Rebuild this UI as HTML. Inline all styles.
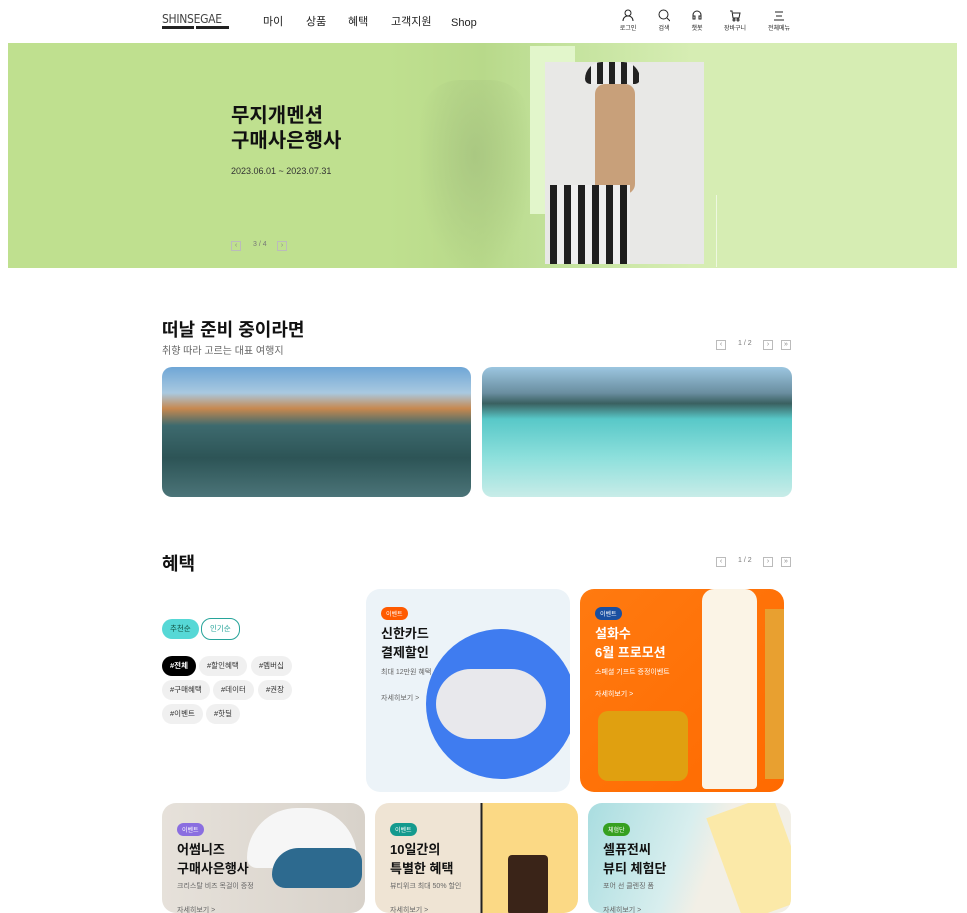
<!DOCTYPE html>
<html><head><meta charset="utf-8"><style>
*{margin:0;padding:0;box-sizing:border-box}
body{width:967px;height:902px;overflow:hidden;background:#fff;font-family:"Liberation Sans","Noto Sans CJK KR",sans-serif;color:#111;position:relative}
.a{position:absolute}
.nav{font-size:11px;color:#222;top:15px;line-height:14px}
.ic{top:9px;width:30px;text-align:center;font-size:6px;color:#222}
.ic svg{display:block;margin:0 auto 1px}
.pg{width:10px;height:10px;border:1px solid #bbb;font-size:7px;line-height:8px;text-align:center;color:#888}
.card{border-radius:14px;overflow:hidden}
.tag{font-size:6px;color:#fff;border-radius:8px;padding:2px 5px;display:inline-block}
.ct{font-size:13px;font-weight:bold;line-height:19px}
.cs{font-size:7px;color:#666}
.chip{height:20px;border-radius:10px;background:#f0f0f0;font-size:7.5px;line-height:20px;padding:0 8px;color:#333}
</style></head><body>
<div class="a" style="left:162px;top:12px;font-size:12px;color:#444;letter-spacing:-0.3px;font-family:'DejaVu Sans Condensed','Liberation Sans',sans-serif">SHINSEGAE</div>
<div class="a" style="left:162px;top:26px;width:32px;height:3px;background:#222"></div>
<div class="a" style="left:196px;top:26px;width:33px;height:3px;background:#222"></div>
<div class="a nav" style="left:263px">마이</div>
<div class="a nav" style="left:306px">상품</div>
<div class="a nav" style="left:348px">혜택</div>
<div class="a nav" style="left:391px">고객지원</div>
<div class="a nav" style="left:451px;top:16px">Shop</div>
<div class="a ic" style="left:613px"><svg width="12" height="13" viewBox="0 0 12 13" fill="none" stroke="#222"><circle cx="6" cy="4" r="3"/><path d="M1 12c0-3 2-5 5-5s5 2 5 5"/></svg>로그인</div>
<div class="a ic" style="left:649px"><svg width="12" height="13" viewBox="0 0 12 13" fill="none" stroke="#222"><circle cx="5.5" cy="5.5" r="4.5"/><path d="M9 9l3 3"/></svg>검색</div>
<div class="a ic" style="left:682px"><svg width="12" height="13" viewBox="0 0 12 13" fill="none" stroke="#222"><path d="M2 8V6a4 4 0 018 0v2M2 7v3h2V7zM10 7v3H8V7z"/></svg>챗봇</div>
<div class="a ic" style="left:720px"><svg width="12" height="13" viewBox="0 0 12 13" fill="none" stroke="#222"><path d="M1 2h2l1 7h6l1-5H4"/><circle cx="5" cy="11" r="1"/><circle cx="9" cy="11" r="1"/></svg>장바구니</div>
<div class="a ic" style="left:764px"><svg width="12" height="13" viewBox="0 0 12 13" fill="none" stroke="#222"><path d="M2 3h8M3 7h6M1 11h10"/></svg>전체메뉴</div>

<div class="a" style="left:8px;top:43px;width:949px;height:225px;background:linear-gradient(90deg,#bfe08f 0%,#bfe08f 40%,#b8d98a 50%,#c3e29c 58%,#d6edb3 72%,#d6edb3 100%)"></div>
<div class="a" style="left:420px;top:80px;width:110px;height:188px;border-radius:40px 40px 0 0;background:radial-gradient(ellipse at 50% 40%,#aac882,transparent 75%)"></div>
<div class="a" style="left:530px;top:46px;width:45px;height:168px;background:#e2f6cb"></div>
<div class="a" style="left:545px;top:62px;width:159px;height:202px;background:#e8e8e6"></div>
<div class="a" style="left:585px;top:62px;width:55px;height:22px;border-radius:20px 20px 6px 6px;background:repeating-linear-gradient(90deg,#222 0 6px,#eee 6px 12px)"></div>
<div class="a" style="left:595px;top:84px;width:40px;height:110px;background:#c8a07a;border-radius:10px"></div>
<div class="a" style="left:550px;top:185px;width:80px;height:79px;background:repeating-linear-gradient(90deg,#1f1f1f 0 7px,#eee 7px 14px)"></div>
<div class="a" style="left:716px;top:195px;width:1px;height:72px;background:#eef8e0"></div>
<div class="a" style="left:231px;top:104px;font-size:20px;font-weight:bold;line-height:25px;color:#111">무지개멘션<br>구매사은행사</div>
<div class="a" style="left:231px;top:166px;font-size:9px;color:#333">2023.06.01 ~ 2023.07.31</div>
<div class="a pg" style="left:231px;top:241px">‹</div>
<div class="a" style="left:253px;top:241px;font-size:7px;color:#777">3 / 4</div>
<div class="a pg" style="left:277px;top:241px">›</div>

<div class="a" style="left:162px;top:316px;font-size:18px;font-weight:bold">떠날 준비 중이라면</div>
<div class="a" style="left:162px;top:342px;font-size:10px;color:#666">취향 따라 고르는 대표 여행지</div>
<div class="a pg" style="left:716px;top:340px">‹</div>
<div class="a" style="left:738px;top:340px;font-size:7px;color:#777">1 / 2</div>
<div class="a pg" style="left:763px;top:340px">›</div>
<div class="a pg" style="left:781px;top:340px">»</div>
<div class="a" style="left:162px;top:367px;width:309px;height:130px;border-radius:10px;background:linear-gradient(180deg,#6fa6d6 0%,#a9c9e0 20%,#c7884f 32%,#3d6a6e 45%,#2d5456 70%,#4b7478 100%)"></div>
<div class="a" style="left:482px;top:367px;width:310px;height:130px;border-radius:10px;background:linear-gradient(180deg,#9cc6e0 0%,#6a8ea0 20%,#3a6060 28%,#58c8c8 40%,#8ee0dc 70%,#c8ece8 100%)"></div>

<div class="a" style="left:162px;top:550px;font-size:18px;font-weight:bold">혜택</div>
<div class="a pg" style="left:716px;top:557px">‹</div>
<div class="a" style="left:738px;top:557px;font-size:7px;color:#777">1 / 2</div>
<div class="a pg" style="left:763px;top:557px">›</div>
<div class="a pg" style="left:781px;top:557px">»</div>

<div class="a chip" style="left:162px;top:619px;background:#56d8d6;color:#154">추천순</div>
<div class="a chip" style="left:201px;top:618px;height:22px;background:#fff;border:1px solid #27a49a;color:#27a49a;line-height:20px">인기순</div>
<div class="a chip" style="left:162px;top:656px;background:#000;color:#fff;font-weight:bold">#전체</div>
<div class="a chip" style="left:199px;top:656px">#할인혜택</div>
<div class="a chip" style="left:251px;top:656px">#멤버십</div>
<div class="a chip" style="left:162px;top:680px">#구매혜택</div>
<div class="a chip" style="left:213px;top:680px">#데이터</div>
<div class="a chip" style="left:258px;top:680px">#권장</div>
<div class="a chip" style="left:162px;top:704px">#이벤트</div>
<div class="a chip" style="left:206px;top:704px">#핫딜</div>

<div class="a card" style="left:366px;top:589px;width:204px;height:203px;background:#ecf3f8">
 <div class="a" style="left:60px;top:40px;width:150px;height:150px;border-radius:50%;background:#3f7cf0"></div>
 <div class="a" style="left:70px;top:80px;width:110px;height:70px;border-radius:35px;background:#e8e8ec"></div>
 <div class="a" style="left:15px;top:14px"><span class="tag" style="background:#ff5a00">이벤트</span><div class="ct" style="margin-top:3px">신한카드<br>결제할인</div><div class="cs" style="margin-top:5px">최대 12만원 혜택</div><div class="cs" style="margin-top:16px">자세히보기 &gt;</div></div>
</div>
<div class="a card" style="left:580px;top:589px;width:204px;height:203px;background:linear-gradient(135deg,#ff7a10,#ff6a00)">
 <div class="a" style="left:122px;top:0;width:55px;height:200px;border-radius:12px 12px 4px 4px;background:#fbf4e6"></div>
 <div class="a" style="left:185px;top:20px;width:20px;height:170px;background:#e8a030"></div>
 <div class="a" style="left:18px;top:122px;width:90px;height:70px;border-radius:10px;background:#e0a010"></div>
 <div class="a" style="left:15px;top:14px;color:#fff"><span class="tag" style="background:#1a4fa0">이벤트</span><div class="ct" style="margin-top:3px;color:#fff">설화수<br>6월 프로모션</div><div class="cs" style="margin-top:5px;color:#fff">스페셜 기프트 증정이벤트</div><div class="cs" style="margin-top:12px;color:#fff">자세히보기 &gt;</div></div>
</div>

<div class="a card" style="left:162px;top:803px;width:203px;height:110px;background:linear-gradient(90deg,#e6e1da,#d8d2ca)">
 <div class="a" style="left:85px;top:5px;width:110px;height:60px;border-radius:50px 50px 10px 10px;background:#f6f6f6"></div>
 <div class="a" style="left:110px;top:45px;width:90px;height:40px;border-radius:40px 20px 20px 20px;background:#2d6a8f"></div>
 <div class="a" style="left:15px;top:16px"><span class="tag" style="background:#8a6ee0">이벤트</span><div class="ct" style="margin-top:3px">어썸니즈<br>구매사은행사</div><div class="cs" style="margin-top:3px">크리스탈 비즈 목걸이 증정</div><div class="cs" style="margin-top:14px">자세히보기 &gt;</div></div>
</div>
<div class="a card" style="left:375px;top:803px;width:203px;height:110px;background:linear-gradient(90deg,#efe4d4 52%,#222 52%,#222 53%,#fbd985 53%)">
 <div class="a" style="left:133px;top:52px;width:40px;height:60px;border-radius:4px;background:#3a2418"></div>
 <div class="a" style="left:15px;top:16px"><span class="tag" style="background:#149a8e">이벤트</span><div class="ct" style="margin-top:3px">10일간의<br>특별한 혜택</div><div class="cs" style="margin-top:3px">뷰티위크 최대 50% 할인</div><div class="cs" style="margin-top:14px">자세히보기 &gt;</div></div>
</div>
<div class="a card" style="left:588px;top:803px;width:203px;height:110px;background:linear-gradient(110deg,#a9dde0 0%,#d8eeee 45%,#f2efe6 60%)">
 <div class="a" style="left:135px;top:0;width:70px;height:110px;background:#fbe9a8;transform:rotate(-20deg)"></div>
 <div class="a" style="left:15px;top:16px"><span class="tag" style="background:#36a020">체험단</span><div class="ct" style="margin-top:3px">셀퓨전씨<br>뷰티 체험단</div><div class="cs" style="margin-top:3px">포어 선 클렌징 폼</div><div class="cs" style="margin-top:14px">자세히보기 &gt;</div></div>
</div>
</body></html>
